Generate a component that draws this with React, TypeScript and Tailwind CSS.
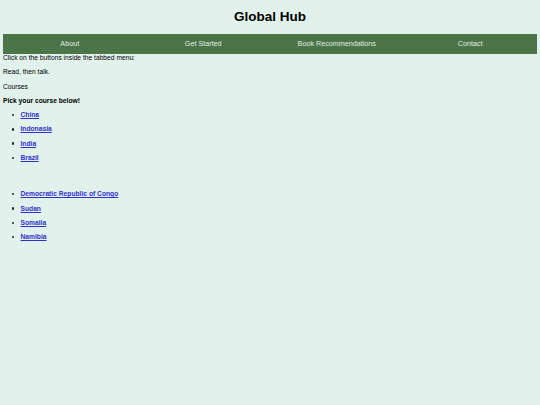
export default function App() {
    const tabs = ['About', 'Get Started', 'Book Recommendations', 'Contact']
    const firstCourses = ['China', 'Indonasia', 'India', 'Brazil']
    const secondCourses = ['Democratic Republic of Congo', 'Sudan', 'Somalia', 'Namibia']

    const renderList = (items: string[], extra: string) => (
        <ul className={extra}>
            {items.map((c) => (
                <li key={c} className="flex items-center gap-[6.5px]">
                    <span className="h-[2.5px] w-[2.5px] rounded-full bg-[#222]" />
                    <a href="#" className="font-bold text-[#3030cc] underline">{c}</a>
                </li>
            ))}
        </ul>
    )

    return (
        <div className="min-h-[405px] bg-[#e1f2ec] px-[3px] font-['Liberation_Sans',Arial,sans-serif] text-[6.7px] leading-[7.7px] text-black">
            <h1 className="pt-[9px] pb-[9px] text-center text-[13.5px] leading-[15.5px] font-bold">Global Hub</h1>

            <div className="grid h-[20px] grid-cols-4 bg-[#4b7449] text-[7.2px] text-[#e3ebe1]">
                {tabs.map((tab) => (
                    <div key={tab} className="flex items-center justify-center">
                        {tab}
                    </div>
                ))}
            </div>

            <div className="flex flex-col gap-[6.6px] pt-[0.5px]">
                <p>Click on the buttons inside the tabbed menu:</p>
                <p>Read, then talk.</p>
                <p>Courses</p>
                <p className="font-bold">Pick your course below!</p>

                {renderList(firstCourses, 'flex flex-col gap-[6.6px] pl-[8.5px]')}
                {renderList(secondCourses, 'mt-[22px] flex flex-col gap-[6.6px] pl-[8.5px]')}
            </div>
        </div>
    )
}
